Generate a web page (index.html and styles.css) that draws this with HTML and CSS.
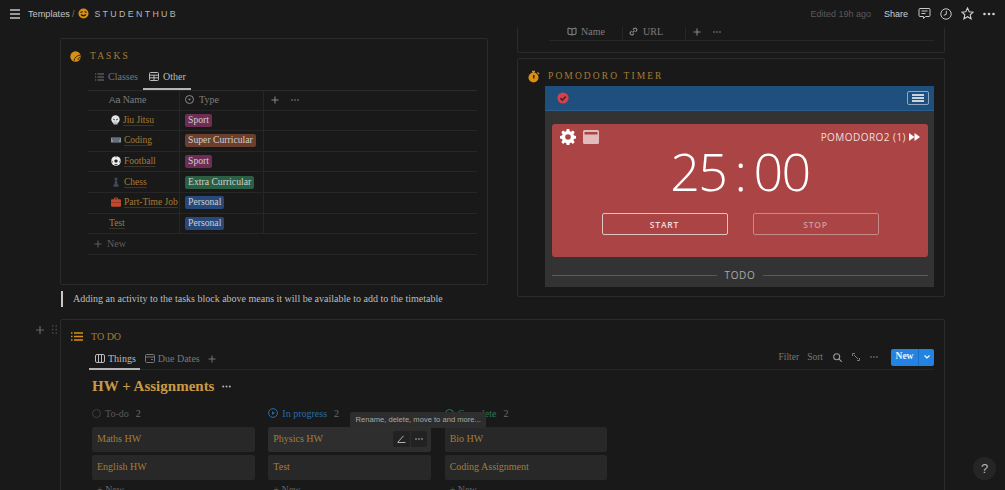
FILE: index.html
```html
<!DOCTYPE html>
<html lang="en">
<head>
<meta charset="utf-8">
<title>StudentHub</title>
<link rel="stylesheet" href="styles.css">
</head>
<body>
<header class="topbar">
  <div class="crumbs">
    <svg class="burger" width="12" height="10" viewBox="0 0 12 10"><path d="M1 1h10M1 5h10M1 9h10" stroke="#c4c4c4" stroke-width="1.5"/></svg>
    <span class="crumb">Templates</span><span class="slash">/</span>
    <svg class="logo" width="11" height="11" viewBox="0 0 11 11"><circle cx="5.5" cy="5.5" r="5" fill="#d98f12"/><path d="M2.500 4.500l2-1M6.500 3.500l2 1M3 6.500q2.500 2.500 5 0" stroke="#191919" stroke-width="1.200" fill="none"/></svg>
    <span class="hub">STUDENTHUB</span>
  </div>
  <div class="actions">
    <span class="edited">Edited 19h ago</span>
    <span class="share">Share</span>
    <svg width="13" height="13" viewBox="0 0 13 13" fill="none" stroke="#c8c8c8"><path d="M2 1.500h9a1 1 0 0 1 1 1v6a1 1 0 0 1-1 1H7.500l-2 2v-2H2a1 1 0 0 1-1-1v-6a1 1 0 0 1 1-1z"/><path d="M3.500 4h6M3.500 6.500h4"/></svg>
    <svg width="12" height="12" viewBox="0 0 12 12" fill="none" stroke="#c8c8c8"><circle cx="6" cy="6" r="5.200"/><path d="M6.300 2.800v3.500L3.800 7.300"/></svg>
    <svg width="13" height="13" viewBox="0 0 13 13" fill="none" stroke="#d0d0d0" stroke-width="1.100"><path d="M6.500 1l1.700 3.700 4 .4-3 2.700.9 4-3.600-2.100-3.600 2.100.9-4-3-2.700 4-.4z"/></svg>
    <svg width="12" height="4" viewBox="0 0 12 4" fill="#d0d0d0"><circle cx="1.500" cy="2" r="1.300"/><circle cx="6" cy="2" r="1.300"/><circle cx="10.500" cy="2" r="1.300"/></svg>
  </div>
</header>

<main class="page">
  <div class="columns">
    <section class="left">
      <div class="card tasks">
        <h2 class="block-title">
          <svg width="11" height="11" viewBox="0 0 11 11"><circle cx="5.500" cy="5.500" r="5.200" fill="#d98f12"/><path d="M4 10q.5-5 6.500-6M8 9q-.5-2 2.500-3" stroke="#191919" fill="none" stroke-width=".8"/></svg>
          <span>TASKS</span>
        </h2>
        <div class="tabs tasks-tabs">
          <span class="tab">
            <svg width="9" height="8" viewBox="0 0 9 8" stroke="#777" fill="none"><path d="M2.500 1H9M2.500 4H9M2.500 7H9M0 1h1.200M0 4h1.200M0 7h1.200"/></svg>
            Classes</span>
          <span class="tab active">
            <svg width="10" height="9" viewBox="0 0 10 9" stroke="#bbb" fill="none"><rect x=".5" y=".5" width="9" height="8" rx="1"/><path d="M.5 3.200h9M.5 5.800h9M5 3.200v5.300" /></svg>
            Other</span>
        </div>
        <div class="table">
          <div class="row head">
            <div class="c1 th"><span class="aa">Aa</span> Name</div>
            <div class="c2 th">
              <svg width="9" height="9" viewBox="0 0 9 9" fill="none" stroke="#8a8a8a"><circle cx="4.500" cy="4.500" r="4"/><path d="M3 3.800h3L4.500 5.800z" fill="#8a8a8a" stroke="none"/></svg>
              Type</div>
            <div class="c3 th plus">
              <svg width="8" height="8" viewBox="0 0 8 8" stroke="#8a8a8a"><path d="M4 .5v7M.5 4h7"/></svg>
              <svg width="8" height="2" viewBox="0 0 8 2" fill="#8a8a8a"><circle cx="1" cy="1" r=".8"/><circle cx="4" cy="1" r=".8"/><circle cx="7" cy="1" r=".8"/></svg>
            </div>
          </div>
          <div class="row">
            <div class="c1 name has-ico">
              <svg class="ico" width="9" height="10" viewBox="0 0 9 10"><circle cx="4.500" cy="4.500" r="4.200" fill="#e4e4e4"/><path d="M2.500 6.500v3h4v-3" fill="#bcc4cc"/><path d="M2 4l2 1M7 4L5 5" stroke="#555"/></svg>
              <u>Jiu Jitsu</u></div>
            <div class="c2"><span class="tag sport">Sport</span></div><div class="c3"></div>
          </div>
          <div class="row">
            <div class="c1 name has-ico">
              <svg class="ico" width="10" height="6" viewBox="0 0 10 6"><rect width="10" height="5" y=".5" rx=".5" fill="#8a95a3"/><path d="M1 2h8M2 4h6" stroke="#3d4650"/></svg>
              <u>Coding</u></div>
            <div class="c2"><span class="tag super">Super Curricular</span></div><div class="c3"></div>
          </div>
          <div class="row">
            <div class="c1 name has-ico">
              <svg class="ico" width="10" height="10" viewBox="0 0 10 10"><circle cx="5" cy="5" r="4.800" fill="#eee"/><path d="M5 3.200L6.800 4.500 6.100 6.600H3.900L3.200 4.500zM4 .6L5 1.500 6 .6M.6 4l1 1.500-.4 1.800M9.400 4l-1 1.500.4 1.800M3 9l1-.8h2l1 .8" fill="#222"/></svg>
              <u>Football</u></div>
            <div class="c2"><span class="tag sport">Sport</span></div><div class="c3"></div>
          </div>
          <div class="row">
            <div class="c1 name has-ico">
              <svg class="ico" width="10" height="10" viewBox="0 0 10 10"><circle cx="5" cy="2" r="1.500" fill="#3e4a5c"/><path d="M4 3.500h2l.5 4h-3zM2.500 7.500h5v2.300h-5z" fill="#3e4a5c"/></svg>
              <u>Chess</u></div>
            <div class="c2"><span class="tag extra">Extra Curricular</span></div><div class="c3"></div>
          </div>
          <div class="row">
            <div class="c1 name has-ico">
              <svg class="ico" width="10" height="10" viewBox="0 0 10 10"><path d="M3.500 2.500V1h3v1.500" fill="none" stroke="#b9452a"/><rect y="2.200" width="10" height="7.500" rx="1" fill="#c2492a"/><path d="M0 5.500h10" stroke="#7e2d1a" stroke-width=".6"/></svg>
              <u>Part-Time Job</u></div>
            <div class="c2"><span class="tag personal">Personal</span></div><div class="c3"></div>
          </div>
          <div class="row">
            <div class="c1 name test"><u>Test</u></div>
            <div class="c2"><span class="tag personal">Personal</span></div><div class="c3"></div>
          </div>
          <div class="row new-row">
            <svg width="8" height="8" viewBox="0 0 8 8" stroke="#5f5f5f"><path d="M4 .5v7M.5 4h7"/></svg>
            New
          </div>
        </div>
      </div>
      <blockquote class="callout">Adding an activity to the tasks block above means it will be available to add to the timetable</blockquote>
    </section>

    <section class="right">
      <div class="card links">
        <div class="links-head">
          <div class="lc1">
            <svg width="10" height="9" viewBox="0 0 10 9" fill="none" stroke="#8a8a8a"><path d="M5 2L1 1v6l4 1 4-1V1zM5 2v6"/></svg>
            Name</div>
          <div class="lc2">
            <svg width="9" height="9" viewBox="0 0 9 9" fill="none" stroke="#8a8a8a" stroke-width="1.100"><path d="M3.500 5.500l2-2M4 2.500l1-1a1.700 1.700 0 0 1 2.400 2.400l-1 1M5 6.500l-1 1A1.700 1.700 0 0 1 1.600 5.100l1-1"/></svg>
            URL</div>
          <div class="lc3">
            <svg width="8" height="8" viewBox="0 0 8 8" stroke="#8a8a8a"><path d="M4 .5v7M.5 4h7"/></svg>
            <svg width="8" height="2" viewBox="0 0 8 2" fill="#8a8a8a"><circle cx="1" cy="1" r=".8"/><circle cx="4" cy="1" r=".8"/><circle cx="7" cy="1" r=".8"/></svg>
          </div>
        </div>
      </div>
      <div class="card pomodoro">
        <h2 class="block-title">
          <svg width="12" height="13" viewBox="0 0 12 13"><circle cx="5.500" cy="7.500" r="5" fill="#d98f12"/><path d="M4 1.500h3M5.500 1.500v2M9.500 2.500l1.500 1.500" stroke="#d98f12" stroke-width="1.300"/><path d="M5.800 5v3.500" stroke="#191919" stroke-width="1.300"/></svg>
          <span>POMODORO TIMER</span>
        </h2>
        <div class="pomo">
          <div class="pomo-bar">
            <svg width="12" height="12" viewBox="0 0 12 12"><circle cx="6" cy="6" r="5.600" fill="#d6404a"/><path d="M3.300 6.200l2 1.900 3.500-3.700" stroke="#3b2330" stroke-width="1.500" fill="none"/></svg>
            <span class="menu-btn"><svg width="12" height="8" viewBox="0 0 12 8"><path d="M0 1h12M0 4h12M0 7h12" stroke="#fff" stroke-width="1.300"/></svg></span>
          </div>
          <div class="pomo-body">
            <div class="timer">
              <div class="timer-top">
                <div class="timer-icons">
                  <svg width="16" height="16" viewBox="0 0 16 16"><path fill="#fff" fill-rule="evenodd" d="M6.700 0h2.600l.4 2.200 1.300.6L12.900 1.500l1.800 1.800-1.300 1.900.6 1.300 2 .4v2.600l-2 .4-.6 1.300 1.300 1.900-1.800 1.800-1.900-1.300-1.300.6-.4 2.200H6.700l-.4-2.200-1.300-.6-1.900 1.300-1.800-1.800 1.300-1.900-.6-1.300-2-.4V6.900l2-.4.6-1.300-1.300-1.900 1.800-1.800L5 2.800l1.300-.6zM8 5.200a2.800 2.800 0 1 0 0 5.600 2.800 2.800 0 0 0 0-5.600z"/></svg>
                  <svg width="16" height="14" viewBox="0 0 16 14"><rect width="16" height="14" rx="1.500" fill="#e2bcbc"/><rect x="1.500" y="2" width="13" height="2.500" fill="#ab4545"/></svg>
                </div>
                <div class="pomo-label">POMODORO2 (1)
                  <svg width="11" height="8" viewBox="0 0 11 8" fill="#fff"><path d="M0 0l5.500 4L0 8zM5.500 0L11 4 5.500 8z"/></svg>
                </div>
              </div>
              <div class="clock">25 : 00</div>
              <div class="buttons">
                <span class="btn">START</span>
                <span class="btn off">STOP</span>
              </div>
            </div>
            <div class="todo-rule">TODO</div>
          </div>
        </div>
      </div>
    </section>
  </div>

  <section class="card todo">
    <div class="gutter">
      <svg width="8" height="8" viewBox="0 0 8 8" stroke="#666" stroke-width="1.200"><path d="M4 0v8M0 4h8"/></svg>
      <svg width="5" height="9" viewBox="0 0 5 9" fill="#555"><circle cx=".8" cy="1" r=".8"/><circle cx="4.200" cy="1" r=".8"/><circle cx=".8" cy="4.500" r=".8"/><circle cx="4.200" cy="4.500" r=".8"/><circle cx=".8" cy="8" r=".8"/><circle cx="4.200" cy="8" r=".8"/></svg>
    </div>
    <h2 class="todo-title">
      <svg width="12" height="9" viewBox="0 0 12 9" stroke="#d98f12" stroke-width="1.300" fill="none"><path d="M3 1h9M3 4.500h9M3 8h9M0 1h1.500M0 4.500h1.500M0 8h1.500"/></svg>
      <span>TO DO</span>
    </h2>
    <div class="todo-bar">
      <div class="tabs">
        <span class="tab active">
          <svg width="10" height="9" viewBox="0 0 10 9" stroke="#bbb" fill="none"><rect x=".5" y=".5" width="9" height="8" rx="1.500"/><path d="M3.500.5v8M6.500.5v8"/></svg>
          Things</span>
        <span class="tab">
          <svg width="10" height="9" viewBox="0 0 10 9" stroke="#777" fill="none"><rect x=".5" y=".5" width="9" height="8" rx="1"/><path d="M.5 3h9M6 5.500h2"/></svg>
          Due Dates</span>
        <svg class="add" width="8" height="8" viewBox="0 0 8 8" stroke="#777"><path d="M4 .5v7M.5 4h7"/></svg>
      </div>
      <div class="tools">
        <span>Filter</span>
        <span>Sort</span>
        <svg width="9" height="9" viewBox="0 0 9 9" fill="none" stroke="#9a9a9a" stroke-width="1.100"><circle cx="3.700" cy="3.700" r="3"/><path d="M5.800 5.800L8.700 8.700"/></svg>
        <svg width="8" height="8" viewBox="0 0 8 8" fill="none" stroke="#7a7a7a" stroke-width="1"><path d="M2 2l4 4M.5 3V.5H3M7.500 5v2.500H5"/></svg>
        <svg width="8" height="2" viewBox="0 0 8 2" fill="#8a8a8a"><circle cx="1" cy="1" r=".8"/><circle cx="4" cy="1" r=".8"/><circle cx="7" cy="1" r=".8"/></svg>
        <span class="new-btn"><span class="new-main">New</span><span class="new-arrow"><svg width="6" height="4" viewBox="0 0 6 4" fill="none" stroke="#fff" stroke-width="1.100"><path d="M.5.500L3 3 5.500.5"/></svg></span></span>
      </div>
    </div>
    <h1 class="board-title">HW + Assignments
      <svg width="9" height="3" viewBox="0 0 9 3" fill="#b5b5b5"><circle cx="1.200" cy="1.500" r="1"/><circle cx="4.500" cy="1.500" r="1"/><circle cx="7.800" cy="1.500" r="1"/></svg>
    </h1>
    <div class="board">
      <div class="col">
        <div class="col-head todo-h">
          <svg width="9" height="9" viewBox="0 0 9 9" fill="none" stroke="#3f3f3f"><circle cx="4.500" cy="4.500" r="4"/></svg>
          To-do <i>2</i></div>
        <div class="kcard">Maths HW</div>
        <div class="kcard">English HW</div>
        <div class="col-more">+ New</div>
      </div>
      <div class="col">
        <div class="col-head prog-h">
          <svg width="10" height="10" viewBox="0 0 10 10" fill="none" stroke="#2c6ba8"><circle cx="5" cy="5" r="4.400"/><path d="M4 3.200L6.800 5 4 6.800z" fill="#2c6ba8" stroke="none"/></svg>
          In progress <i>2</i></div>
        <div class="kcard hovered">Physics HW
          <span class="hover-tools">
            <span><svg width="9" height="8" viewBox="0 0 9 8" fill="none" stroke="#b0b0b0"><path d="M.5 7.500h8M1 7L6.500.8"/></svg></span>
            <span><svg width="8" height="2" viewBox="0 0 8 2" fill="#c0c0c0"><circle cx="1" cy="1" r=".8"/><circle cx="4" cy="1" r=".8"/><circle cx="7" cy="1" r=".8"/></svg></span>
          </span>
        </div>
        <div class="kcard">Test</div>
        <div class="col-more">+ New</div>
      </div>
      <div class="col">
        <div class="col-head done-h">
          <svg width="9" height="9" viewBox="0 0 9 9" fill="none" stroke="#2b7a55"><circle cx="4.500" cy="4.500" r="4"/></svg>
          <span class="done-label">Complete</span> <i>2</i></div>
        <div class="kcard">Bio HW</div>
        <div class="kcard">Coding Assignment</div>
        <div class="col-more">+ New</div>
      </div>
      <div class="tooltip">Rename, delete, move to and more...</div>
    </div>
  </section>
</main>
<div class="help">?</div>
</body>
</html>
```

FILE: styles.css
```css
* { box-sizing: border-box; }
html, body { margin: 0; height: 100%; }
body {
  width: 1005px; height: 490px; overflow: hidden; position: relative;
  background: #191919; color: #c8c8c8;
  font-family: "Liberation Serif", serif; font-size: 10px;
}
svg { flex: none; display: block; }
h1, h2, blockquote { margin: 0; font-weight: normal; }

.topbar {
  height: 27px; display: flex; justify-content: space-between; align-items: center;
  padding: 0 10px 0 9px;
  font-family: "Liberation Sans", sans-serif; font-size: 9px;
}
.crumbs, .actions { display: flex; align-items: center; }
.burger { margin-right: 7px; }
.crumb { color: #c4c4c4; font-size: 9.200px; }
.slash { color: #777; margin: 0 4px 0 2px; }
.hub { color: #b8b8b8; letter-spacing: 2.350px; margin-left: 5px; font-size: 8.800px; }
.actions svg { margin-left: 9px; }
.edited { color: #5a5a5a; margin-right: 13px; }
.share { color: #cfcfcf; margin-right: 1px; }

.page { padding-left: 60px; width: 945px; }
.columns { display: flex; gap: 29px; }
.left { width: 428px; padding-top: 11px; }
.right { width: 428px; }
.card { border: 1px solid #2b2b2b; border-radius: 2px; }

.block-title {
  display: flex; align-items: center; gap: 9px; height: 12px;
  color: #a67c35; font-size: 9.500px; letter-spacing: 2.100px;
}
.tasks { height: 247px; padding: 11px 10px 0 10px; }
.tasks .block-title { margin-left: -1px; }

.tabs { display: flex; align-items: center; height: 22px; color: #777; }
.tab { display: flex; align-items: center; gap: 3px; height: 100%; padding: 0 5px 0 5px; white-space: nowrap; }
.tab.active { color: #bbb; border-bottom: 2px solid #b5b5b5; padding: 0 4px 0 6px; }
.tasks-tabs { margin: 6px 0 0 17px; height: 22px; }
.tasks-tabs .tab { gap: 4px; padding: 0 5px 5px 7px; }
.tasks-tabs .tab.active { padding: 0 5px 3px 6px; }

.table { margin-left: 17px; }
.row { display: flex; height: 20.600px; border-bottom: 1px solid #262626; align-items: center; }
.row.head { border-top: 1px solid #2b2b2b; }
.row > div { height: 100%; display: flex; align-items: center; }
.c1 { width: 92px; border-right: 1px solid #262626; padding-left: 21px; }
.c2 { width: 84px; border-right: 1px solid #262626; padding-left: 5px; gap: 5px; }
.c3 { flex: 1; padding-left: 7px; }
.th { color: #7d7d7d; padding-bottom: 1px; }
.aa { font-family: "Liberation Sans", sans-serif; margin-right: 2px; font-size: 9.500px; }
.plus { gap: 12px; }
.name { color: #a67c35; white-space: nowrap; padding-left: 23px; gap: 3px; font-size: 9.500px; padding-bottom: 1px; }
.name u { text-decoration: underline; text-decoration-color: #3f3526; text-underline-offset: 2px; }
.test { padding-left: 21px; }
.tag { display: block; padding: 0 3px; height: 13px; line-height: 12px; border-radius: 2px; color: #cfcfcf; white-space: nowrap; font-size: 9.700px; }
.sport { background: #6e2d52; }
.super { background: #6b3f2b; }
.extra { background: #2a5f43; }
.personal { background: #28487a; }
.new-row { color: #5f5f5f; gap: 5px; padding-left: 6px; }

.callout {
  margin-top: 6px; height: 16px; border-left: 2px solid #c8c8c8; padding-left: 10px; margin-left: 1px;
  line-height: 15px; color: #bdbdbd; white-space: nowrap;
}

.links { height: 26px; border-top: 0; padding: 0 10px 0 31px; }
.links-head { display: flex; height: 14px; border-bottom: 1px solid #262626; color: #7d7d7d; align-items: stretch; }
.links-head > div { display: flex; align-items: center; gap: 4px; padding-bottom: 4px; }
.lc1 { width: 74px; padding-left: 18px; border-right: 1px solid #262626; }
.lc2 { width: 63px; padding-left: 6px; gap: 5px !important; border-right: 1px solid #262626; }
.lc3 { padding-left: 7px; gap: 12px !important; }

.pomodoro { height: 239px; margin-top: 5px; padding: 11px 10px 0 10px; }
.pomodoro .block-title { color: #a67c35; margin-bottom: 4px; gap: 8px; }
.pomo { margin-left: 17px; height: 201px; font-family: "Open Sans", sans-serif; }
.pomo-bar {
  height: 25px; background: #1f4f7d; border-bottom: 1px solid #2b5d8c;
  display: flex; justify-content: space-between; align-items: center; padding: 0 5px 0 12px;
}
.menu-btn { display: flex; align-items: center; justify-content: center; width: 22px; height: 14px; border: 1px solid #8fa9c2; border-radius: 2px; }
.pomo-body { height: 176px; background: #333; padding: 13px 6px 0 7px; }
.timer { height: 133px; background: #ab4545; border-radius: 3px; padding: 5px 8px 0 8px; }
.timer-top { display: flex; justify-content: space-between; align-items: center; height: 16px; }
.timer-icons { display: flex; gap: 7px; align-items: center; }
.pomo-label { display: flex; align-items: center; gap: 3px; color: #f0dede; font-size: 10px; letter-spacing: .45px; }
.clock {
  text-align: center; color: #fff; font-weight: 300; font-size: 52px; line-height: 60px;
  margin-top: -4px; letter-spacing: -1.500px; word-spacing: -4px; white-space: nowrap;
}
.buttons { display: flex; gap: 25px; justify-content: center; margin-top: 12px; }
.btn {
  width: 126px; height: 22px; border: 1px solid #e0c4c4; border-radius: 2px; display: flex;
  align-items: center; justify-content: center; color: #f0dede; font-size: 8.500px; font-weight: 600; letter-spacing: .8px;
}
.btn.off { border-color: #c48a8a; color: #cf9a9a; }
.todo-rule {
  display: flex; align-items: center; gap: 7px; margin-top: 11px; color: #aaa; font-size: 10px; letter-spacing: .7px;
}
.todo-rule::before, .todo-rule::after { content: ""; flex: 1; height: 1px; background: #5a5a5a; }

.todo { position: relative; margin-top: 12px; height: 200px; padding: 10px 10px 0 10px; width: 885px; }
.gutter { position: absolute; left: -25px; top: 5px; display: flex; gap: 8px; align-items: center; }
.todo-title { display: flex; align-items: center; gap: 8px; height: 12px; color: #a67c35; font-size: 10px; margin-bottom: 6px; }
.todo-bar { display: flex; justify-content: space-between; align-items: center; height: 22px; margin-left: 18px; border-bottom: 1px solid #262626; }
.todo-bar .add { margin-left: 3px; }
.todo-bar .tab.active { margin-bottom: -1px; height: 22px; }
.tools { display: flex; align-items: center; gap: 8px; color: #777; margin-bottom: 3px; font-size: 9.500px; }
.tools > svg { margin-left: 2px; }
.new-btn { display: flex; height: 17px; background: #2383e2; border-radius: 2px; color: #e8f2fc; margin-left: 5px; }
.new-main { width: 28px; text-align: center; line-height: 14px; font-weight: bold; border-right: 1px solid #1b6dbf; }
.new-arrow { width: 15px; display: flex; align-items: center; justify-content: center; }

.board-title { display: flex; align-items: center; gap: 8px; margin: 8px 0 0 21px; height: 16px; color: #c99a45; font-size: 15px; font-weight: bold; }
.board { position: relative; display: grid; grid-template-columns: repeat(3, 162.670px); column-gap: 13.670px; margin: 10px 0 0 21px; }
.col-head { display: flex; align-items: center; gap: 4px; height: 18px; margin-bottom: 5px; white-space: nowrap; }
.col-head i { font-style: normal; color: #6a6a6a; margin-left: 3px; }
.todo-h { color: #5a5a5a; }
.prog-h { color: #2c6ba8; }
.done-h { color: #2b7a55; }
.kcard {
  position: relative; height: 25px; margin-bottom: 3px; background: #282828; border-radius: 2px;
  padding: 0 5px; line-height: 23px; color: #a67c35;
}
.kcard.hovered { background: #2e2e2e; }
.hover-tools { position: absolute; right: 4px; top: 4px; display: flex; height: 16px; background: #222; border-radius: 2px; }
.hover-tools span { width: 17px; display: flex; align-items: center; justify-content: center; }
.hover-tools span + span { border-left: 1px solid #2e2e2e; }
.col-more { color: #666; padding-left: 5px; margin-top: 4px; }
.tooltip {
  position: absolute; left: 258px; top: 8px; padding: 0 5.500px; height: 16px; line-height: 15px; background: rgba(47, 47, 47, .92); border-radius: 2px;
  color: #a8a8a8; font-family: "Liberation Sans", sans-serif; font-size: 7.600px; white-space: nowrap; z-index: 2;
}
.help {
  position: absolute; left: 973px; top: 457px; width: 23px; height: 23px; border-radius: 50%;
  background: #252525; color: #b8b8b8; font: 13px/23px "Liberation Sans", sans-serif; text-align: center;
}
```
